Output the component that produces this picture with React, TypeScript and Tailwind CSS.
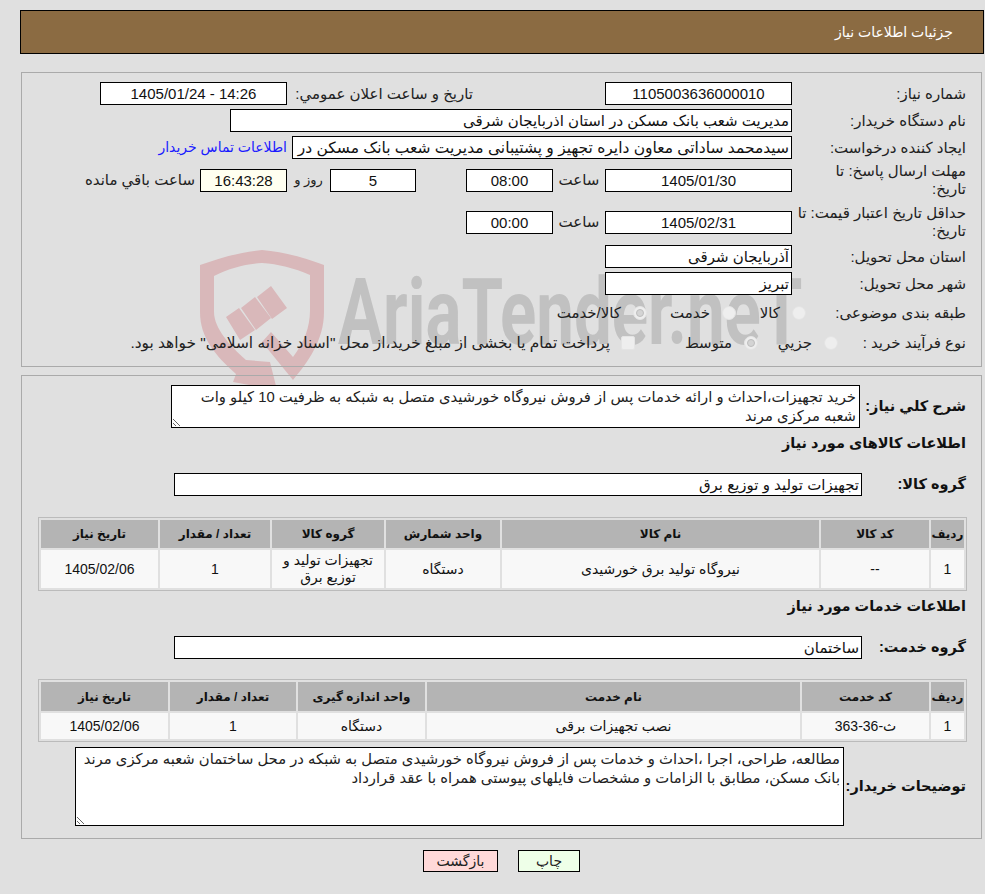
const field = "h-[23px] border border-black px-[2px] text-[15px] text-[#111] outline-none";
const fa = "font-['Liberation_Sans','DejaVu_Sans',sans-serif]";
const th = "bg-[#b4b4b4] text-center text-[12px] font-bold text-[#111]";
const td = "bg-[#f8f8f8] text-center text-[14px] leading-[17px] text-[#111]";

const Label = ({ children, bold }: { children: React.ReactNode; bold?: boolean }) => (
  <div className={bold ? "pr-[1px] text-[14.5px] font-bold text-[#111]" : "pr-[1px] text-[15px] leading-[18px] text-[#222]"}>{children}</div>
);

const Radio = ({ checked }: { checked?: boolean }) => (
  <span className="flex h-[14px] w-[14px] shrink-0 items-center justify-center rounded-full border border-[#e4e4e4] bg-[#eeeeee]">
    {checked && <span className="h-[8px] w-[8px] rounded-full border border-[#bdbdbd] bg-[#d4d4d4]" />}
  </span>
);

const Watermark = () => (
  <div className="pointer-events-none absolute left-[200px] top-[250px] z-0 h-[140px] w-[620px]">
    <svg width="126" height="140" viewBox="0 0 126 140" className="absolute left-0 top-0">
      <path
        d="M62 0 C84 2 106 8 124 15 L124 62 C124 90 108 112 93 130 L62 92 L71 82 L93 107 C104 92 110 78 110 60 L110 25 C94 18 78 14 62 13 C46 14 30 18 14 26 L14 62 C14 78 30 96 46 110 L70 112 L77 140 L33 132 L36 124 C16 106 0 88 0 62 L0 15 C20 8 40 2 62 0 Z"
        fill="#d9b8ba"
      />
      <path d="M71 36 L87 58 L72 69 L57 47 Z M55 47 L71 68 L56 80 L41 58 Z M39 58 L55 80 L40 90 L26 67 Z" fill="#d9b8ba" />
    </svg>
    <div className="absolute left-[138px] top-[8px] origin-left scale-x-[0.73] whitespace-nowrap font-['Roboto',sans-serif] text-[92px] leading-[110px] font-bold text-[#c1c1c1]">
      AriaTender.neT
    </div>
  </div>
);

const App = () => {
  return (
    <div dir="rtl" className={`relative min-h-[894px] w-[985px] bg-[#e0e0e0] pt-[10px] ${fa}`}>
      <Watermark />
      <div className="relative z-10">
        <div className="ml-[20px] mr-[1px] flex h-[44px] items-center border border-black bg-[#8b6b42] pr-[30px] text-[14px] text-white">
          جزئیات اطلاعات نیاز
        </div>

        <div className="ml-[21px] mr-[3px] mt-[18px] flex h-[295px] flex-col border border-[#aaa] pr-[14px] pt-[9px]">
          <div className="flex h-[23px] items-center">
            <div className="w-[175px]"><Label>شماره نیاز:</Label></div>
            <input readOnly value="1105003636000010" className={`w-[187px] bg-white text-center ${field}`} />
            <div className="mr-[131px] w-[181px] whitespace-nowrap"><Label>تاریخ و ساعت اعلان عمومي:</Label></div>
            <input readOnly value="1405/01/24 - 14:26" dir="ltr" className={`mr-[6px] w-[187px] bg-white text-center ${field}`} />
          </div>
          <div className="mt-[4px] flex h-[23px] items-center">
            <div className="w-[175px]"><Label>نام دستگاه خریدار:</Label></div>
            <input readOnly value="مدیریت شعب بانک مسکن در استان اذربایجان شرقی" className={`w-[562px] bg-white ${field}`} />
          </div>
          <div className="mt-[4px] flex h-[23px] items-center">
            <div className="w-[175px]"><Label>ایجاد کننده درخواست:</Label></div>
            <input readOnly value="سیدمحمد ساداتی معاون دایره تجهیز و پشتیبانی مدیریت شعب بانک مسکن در" className="h-[23px] w-[500px] border border-black bg-white px-[2px] text-[15.5px] text-[#111] outline-none" />
            <a className="mr-[5px] text-[14px] text-[#1a1aff]">اطلاعات تماس خریدار</a>
          </div>
          <div className="mt-[4px] flex h-[34px] items-center">
            <div className="w-[175px] pl-[10px]"><Label>مهلت ارسال پاسخ: تا تاریخ:</Label></div>
            <input readOnly value="1405/01/30" className={`w-[187px] bg-white text-center ${field}`} />
            <div className="w-[52px] text-center text-[15px] text-[#222]">ساعت</div>
            <input readOnly value="08:00" className={`w-[87px] bg-white text-center ${field}`} />
            <input readOnly value="5" className={`mr-[50px] w-[86px] bg-white text-center ${field}`} />
            <div className="w-[43px] text-center text-[13px] text-[#222]">روز و</div>
            <input readOnly value="16:43:28" className={`w-[87px] bg-[#fffff0] text-center ${field}`} />
            <div className="mr-[5px] text-[15px] text-[#222]">ساعت باقي مانده</div>
          </div>
          <div className="mt-[8px] flex h-[34px] items-center">
            <div className="w-[175px]"><Label>حداقل تاریخ اعتبار قیمت: تا تاریخ:</Label></div>
            <input readOnly value="1405/02/31" className={`w-[187px] bg-white text-center ${field}`} />
            <div className="w-[52px] text-center text-[15px] text-[#222]">ساعت</div>
            <input readOnly value="00:00" className={`w-[87px] bg-white text-center ${field}`} />
          </div>
          <div className="mt-[6px] flex h-[23px] items-center">
            <div className="w-[175px]"><Label>استان محل تحویل:</Label></div>
            <input readOnly value="آذربایجان شرقی" className={`w-[187px] bg-white ${field}`} />
          </div>
          <div className="mt-[4px] flex h-[23px] items-center">
            <div className="w-[175px]"><Label>شهر محل تحویل:</Label></div>
            <input readOnly value="تبریز" className={`w-[187px] bg-white ${field}`} />
          </div>
          <div className="mt-[6px] flex h-[24px] items-center text-[15px] text-[#222]">
            <div className="w-[161px]"><Label>طبقه بندی موضوعی:</Label></div>
            <div className="flex w-[70px] items-center gap-[12px]"><Radio /><span className="whitespace-nowrap">کالا</span></div>
            <div className="flex w-[89px] items-center gap-[12px]"><Radio /><span className="whitespace-nowrap">خدمت</span></div>
            <div className="flex items-center gap-[12px]"><Radio checked /><span className="whitespace-nowrap">کالا/خدمت</span></div>
          </div>
          <div className="mt-[6px] flex h-[24px] items-center text-[15px] text-[#222]">
            <div className="w-[129px] whitespace-nowrap"><Label>نوع فرآیند خرید :</Label></div>
            <div className="flex w-[80px] items-center gap-[12px]"><Radio /><span className="whitespace-nowrap">جزیي</span></div>
            <div className="flex w-[123px] items-center gap-[12px]"><Radio checked /><span className="whitespace-nowrap">متوسط</span></div>
            <div className="flex items-center gap-[11px]">
              <span className="h-[14px] w-[14px] shrink-0 rounded-[2px] border border-[#e4e4e4] bg-[#eeeeee]" />
              <span className="whitespace-nowrap text-[15.4px]">پرداخت تمام یا بخشی از مبلغ خرید،از محل "اسناد خزانه اسلامی" خواهد بود.</span>
            </div>
          </div>
        </div>

        <div className="ml-[21px] mr-[3px] mt-[8px] h-[464px] border border-[#aaa] pr-[14px] pt-[9px]">
          <div className="flex items-center">
            <div className="w-[107px]"><Label bold>شرح کلي نیاز:</Label></div>
            <textarea
              readOnly
              className="h-[43px] w-[689px] resize border border-black bg-white px-[3px] pt-[2px] text-[14.8px] leading-[19px] text-[#222] outline-none"
              value={"خرید تجهیزات،احداث و ارائه خدمات پس از فروش نیروگاه خورشیدی متصل به شبکه به ظرفیت 10 کیلو وات\nشعبه مرکزی مرند"}
            />
          </div>
          <div className="mt-[5px] h-[20px]"><Label bold>اطلاعات کالاهای مورد نیاز</Label></div>
          <div className="mt-[20px] flex h-[23px] items-center">
            <div className="w-[105px]"><Label bold>گروه کالا:</Label></div>
            <input readOnly value="تجهیزات تولید و توزیع برق" className={`w-[688px] bg-white ${field}`} />
          </div>

          <table className="mt-[21px] w-[929px] border-separate border-spacing-[2px] border border-[#bbb]" style={{ tableLayout: "fixed" }}>
            <colgroup>
              <col className="w-[33px]" />
              <col className="w-[108px]" />
              <col className="w-[317px]" />
              <col className="w-[114px]" />
              <col className="w-[112px]" />
              <col className="w-[110px]" />
              <col className="w-[117px]" />
            </colgroup>
            <thead>
              <tr className="h-[28px]">
                {["ردیف", "کد کالا", "نام کالا", "واحد شمارش", "گروه کالا", "تعداد / مقدار", "تاریخ نیاز"].map((h) => (
                  <th key={h} className={th}>{h}</th>
                ))}
              </tr>
            </thead>
            <tbody>
              <tr className="h-[38px]">
                <td className={td}>1</td>
                <td className={td}>--</td>
                <td className={td}>نیروگاه تولید برق خورشیدی</td>
                <td className={td}>دستگاه</td>
                <td className={td}>تجهیزات تولید و توزیع برق</td>
                <td className={td}>1</td>
                <td className={td}>1405/02/06</td>
              </tr>
            </tbody>
          </table>

          <div className="mt-[5px] h-[20px]"><Label bold>اطلاعات خدمات مورد نیاز</Label></div>
          <div className="mt-[20px] flex h-[23px] items-center">
            <div className="w-[105px]"><Label bold>گروه خدمت:</Label></div>
            <input readOnly value="ساختمان" className={`w-[688px] bg-white ${field}`} />
          </div>

          <table className="mt-[20px] w-[929px] border-separate border-spacing-[2px] border border-[#bbb]" style={{ tableLayout: "fixed" }}>
            <colgroup>
              <col className="w-[33px]" />
              <col className="w-[127px]" />
              <col className="w-[373px]" />
              <col className="w-[127px]" />
              <col className="w-[126px]" />
              <col className="w-[127px]" />
            </colgroup>
            <thead>
              <tr className="h-[29px]">
                {["ردیف", "کد خدمت", "نام خدمت", "واحد اندازه گیری", "تعداد / مقدار", "تاریخ نیاز"].map((h) => (
                  <th key={h} className={th}>{h}</th>
                ))}
              </tr>
            </thead>
            <tbody>
              <tr className="h-[26px]">
                <td className={td}>1</td>
                <td className={td}>ث-36-363</td>
                <td className={td}>نصب تجهیزات برقی</td>
                <td className={td}>دستگاه</td>
                <td className={td}>1</td>
                <td className={td}>1405/02/06</td>
              </tr>
            </tbody>
          </table>

          <div className="mt-[5px] flex items-center">
            <div className="w-[123px]"><Label bold>توضیحات خریدار:</Label></div>
            <textarea
              readOnly
              className="h-[79px] w-[769px] resize border border-black bg-white px-[3px] pt-[2px] text-[14.8px] leading-[19px] text-[#222] outline-none"
              value={"مطالعه، طراحی، اجرا ،احداث و خدمات پس از فروش نیروگاه خورشیدی متصل به شبکه در محل ساختمان شعبه مرکزی مرند\nبانک مسکن، مطابق با الزامات و مشخصات فایلهای پیوستی همراه با عقد قرارداد"}
            />
          </div>
        </div>

        <div className="mt-[11px] flex justify-center gap-[20px] pl-[18px]">
          <button className="h-[22px] w-[62px] border border-black bg-[#eeffe8] text-[14px] text-[#222]">چاپ</button>
          <button className="h-[22px] w-[75px] border border-black bg-[#ffd9d9] text-[14px] text-[#222]">بازگشت</button>
        </div>
      </div>
    </div>
  );
};

export default App;
